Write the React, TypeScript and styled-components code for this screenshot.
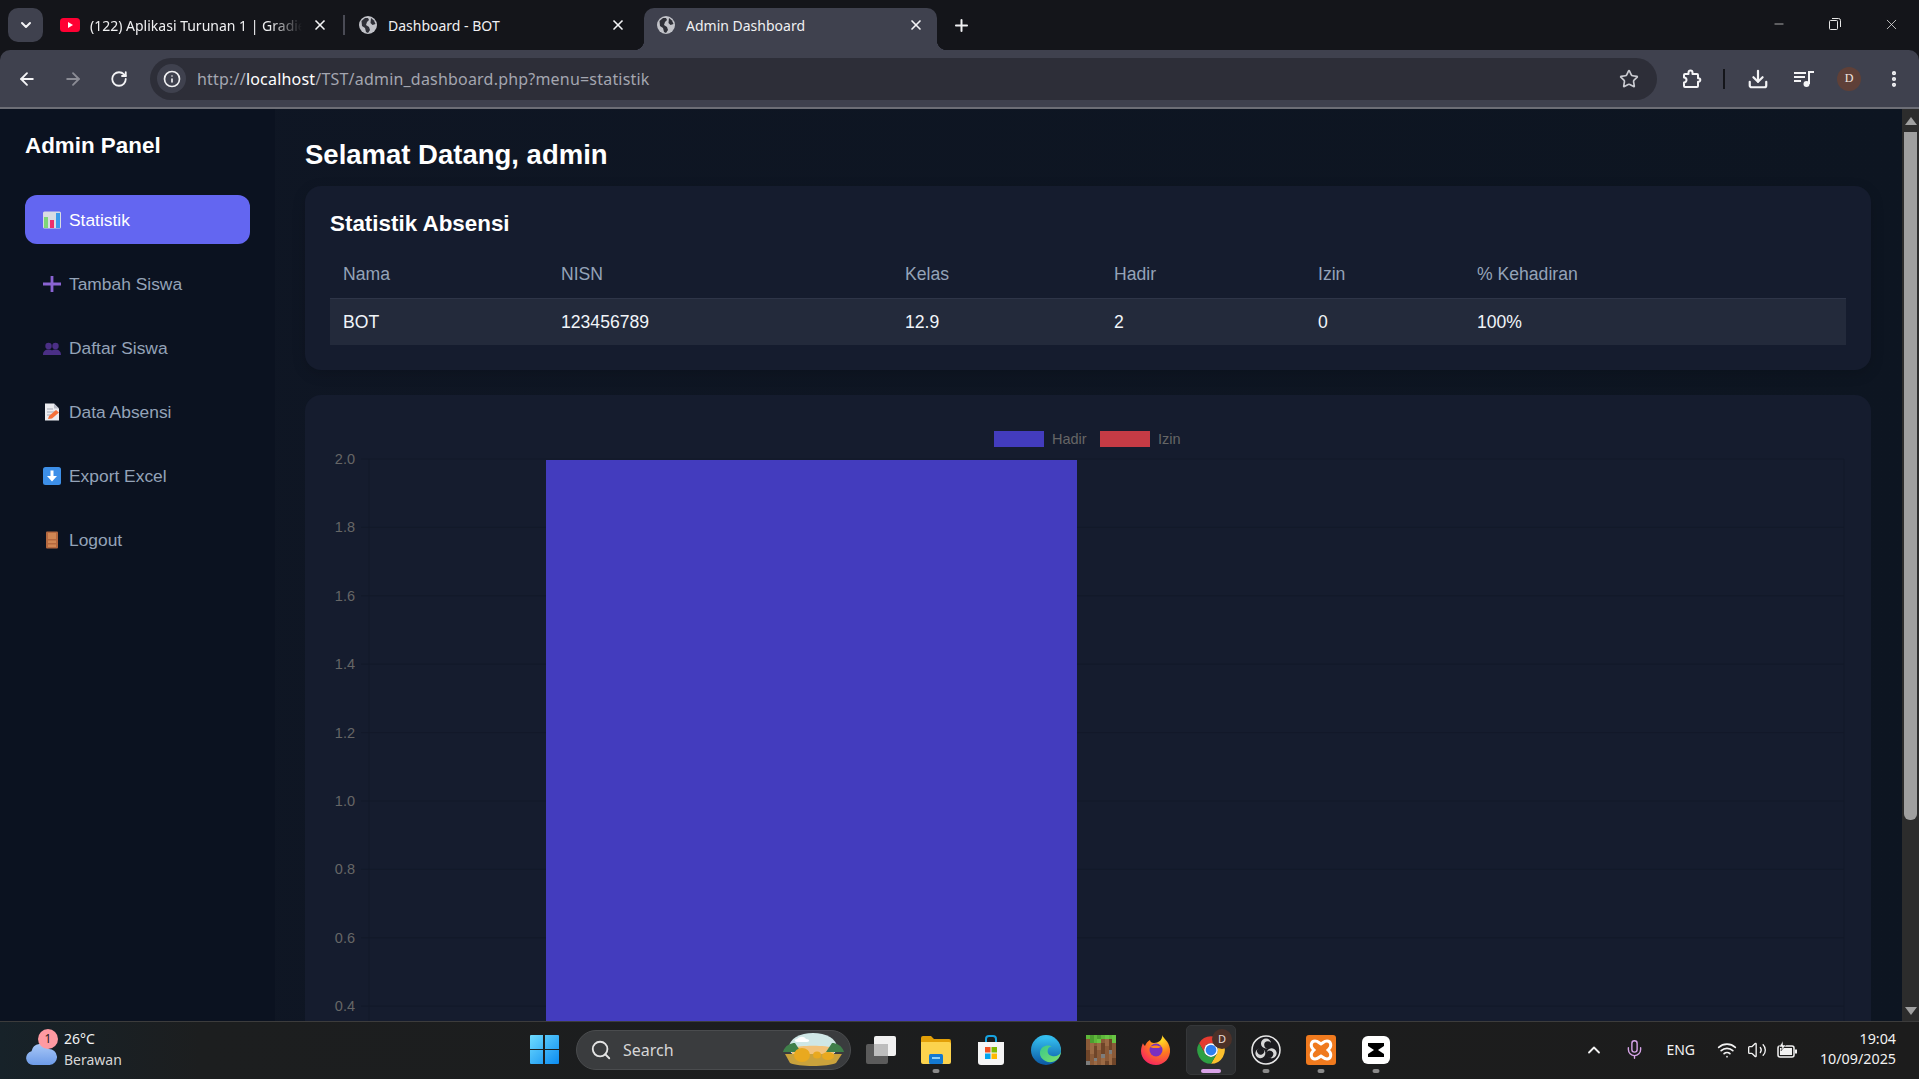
import React from 'react';
import styled, { createGlobalStyle } from 'styled-components';
import {
  ArrowLeft,
  ArrowRight,
  ChevronDown,
  ChevronUp,
  Download,
  EllipsisVertical,
  Info,
  Mic,
  Minus,
  Plus,
  RotateCw,
  Search,
  Star,
  Volume2,
  Wifi,
  X,
} from 'lucide-react';

const GlobalStyle = createGlobalStyle`
  html, body {
    margin: 0;
    height: 100%;
    overflow: hidden;
    background: #14151a;
  }
  * {
    box-sizing: border-box;
  }
`;

const YoutubeIcon = () => (
  <svg width="20" height="14" viewBox="0 0 20 14">
    <rect width="20" height="14" rx="3.5" fill="#ff0033" />
    <path d="M8 4l5 3-5 3z" fill="#fff" />
  </svg>
);

const GlobeIcon = () => (
  <svg width="20" height="20" viewBox="0 0 20 20">
    <circle cx="10" cy="10" r="9" fill="#c2c3c9" />
    <path d="M3.500 6l3.500-3 3 0 1 2-2 2-1 3 3 2 1 3-2 3-2-1-1-4-3-2z" fill="#2f3038" />
    <path d="M13 3l3 2.500 1.500 3.500-3 1-2-2z" fill="#2f3038" />
  </svg>
);

const PuzzleIcon = () => (
  <svg width="24" height="24" viewBox="0 0 24 24" fill="none" stroke="#f4f4f6" strokeWidth="2" strokeLinejoin="round">
    <path d="M6 7h3.500V5.500a2 2 0 0 1 4 0V7H18a1 1 0 0 1 1 1v3.200h.5a1.800 1.800 0 0 1 0 3.600H19V19a1 1 0 0 1-1 1H6a1 1 0 0 1-1-1v-3.500a2.500 2.500 0 0 0 0-5V8a1 1 0 0 1 1-1z" />
  </svg>
);

const MediaIcon = () => (
  <svg width="22" height="22" viewBox="0 0 22 22" fill="none" stroke="#f4f4f6" strokeWidth="2">
    <path d="M1 5h12M1 9h11M1 13h7" />
    <path d="M16 16V4h5" />
    <circle cx="13.500" cy="16" r="3" fill="#f4f4f6" stroke="none" />
  </svg>
);

const RestoreIcon = () => (
  <svg width="14" height="14" viewBox="0 0 14 14" fill="none" stroke="#e6e6e6" strokeWidth="1">
    <rect x="1.5" y="3.5" width="8" height="9" rx="1" />
    <path d="M4 1.5h6.5a2 2 0 0 1 2 2V10" />
  </svg>
);

const StatIcon = () => (
  <svg width="18" height="18" viewBox="0 0 18 18">
    <rect y="0.5" width="18" height="17" rx="1.5" fill="#d9dce3" />
    <rect x="1" y="6" width="4" height="11" fill="#7ed67a" />
    <rect x="7" y="9" width="4" height="8" fill="#ec2f6b" />
    <rect x="13" y="2" width="4" height="15" fill="#3b9bea" />
  </svg>
);

const AddIcon = () => (
  <svg width="18" height="18" viewBox="0 0 18 18">
    <path d="M7.6 1h2.8v6.6H18v2.8h-7.6V17H7.6v-6.6H0V7.6h7.6z" fill="#8a63d2" />
  </svg>
);

const PeopleIcon = () => (
  <svg width="18" height="18" viewBox="0 0 18 18" fill="#4b2f86">
    <circle cx="5.5" cy="7" r="3.2" />
    <circle cx="12.5" cy="7" r="3.2" />
    <path d="M0 16c0-3.4 2.2-5.4 5.5-5.4 1.5 0 2.6.4 3.5 1 .9-.6 2-1 3.5-1 3.3 0 5.5 2 5.5 5.4z" />
  </svg>
);

const MemoIcon = () => (
  <svg width="18" height="18" viewBox="0 0 18 18">
    <path d="M2 0.5h9l5 5v12H2z" fill="#ececf0" />
    <path d="M11 0.5l5 5h-5z" fill="#b9bcc6" />
    <path d="M4 6h6M4 9h8M4 12h4" stroke="#a5a8b5" strokeWidth="1" />
    <path d="M5 16l1-3 7-6 3 2.600-7 6z" fill="#f4703a" />
  </svg>
);

const DownBoxIcon = () => (
  <svg width="18" height="18" viewBox="0 0 18 18">
    <rect width="18" height="18" rx="2.500" fill="#3d8fe8" />
    <path d="M7.500 3.500h3v5.500H14l-5 5.500-5-5.500h3.500z" fill="#fff" />
  </svg>
);

const DoorIcon = () => (
  <svg width="18" height="18" viewBox="0 0 18 18">
    <rect x="3" y="0.500" width="12" height="17" rx="1" fill="#b5683f" />
    <path d="M5 2h8v6H5zM5 9.500h8V12H5zM5 13.500h8V16H5z" fill="#d18653" />
  </svg>
);

const CloudIcon = () => (
  <svg width="32" height="24" viewBox="0 0 32 24">
    <defs>
      <linearGradient id="cloudFill" x1="0" y1="0" x2="0" y2="1">
        <stop offset="0" stopColor="#a9c8f7" />
        <stop offset="1" stopColor="#6d9be8" />
      </linearGradient>
    </defs>
    <path
      d="M8 24a7 7 0 0 1-1.500-13.800A9 9 0 0 1 23.500 8a8 8 0 0 1 1 16z"
      fill="url(#cloudFill)"
    />
  </svg>
);

const WindowsIcon = () => (
  <svg width="29" height="29" viewBox="0 0 29 29">
    <defs>
      <linearGradient id="winFill" x1="0" y1="0" x2="1" y2="1">
        <stop offset="0" stopColor="#6fdcff" />
        <stop offset="1" stopColor="#0b8bf0" />
      </linearGradient>
    </defs>
    <path
      d="M1 0h12v14H0V1a1 1 0 0 1 1-1zM15 0h13a1 1 0 0 1 1 1v13H15zM0 15h13v14H1a1 1 0 0 1-1-1zM15 15h14v13a1 1 0 0 1-1 1H15z"
      fill="url(#winFill)"
    />
  </svg>
);

const SearchArt = () => (
  <svg width="63" height="34" viewBox="0 0 63 34">
    <ellipse cx="31" cy="14" rx="24" ry="14" fill="#cfe7e6" />
    <path d="M10 15c8-3 34-3 42 0v8H10z" fill="#f2c27a" />
    <path d="M1 19c2-7 8-9 12-9l6 9zM62 19c-2-7-8-9-12-9l-6 9z" fill="#3f7f4a" />
    <path d="M15 6c3-3 7-3 9 0 4 0 4 3 1 3H15c-3 0-3-3 0-3z" fill="#fff" />
    <path d="M3 21h57l-6 9c-8 4-38 4-46 0z" fill="#caa23c" />
    <ellipse cx="20" cy="22" rx="8" ry="7" fill="#e9a91f" />
    <ellipse cx="35" cy="22" rx="4" ry="3.500" fill="#e9a91f" />
    <ellipse cx="46" cy="23" rx="6" ry="4" fill="#e9a91f" />
  </svg>
);

const TaskViewIcon = () => (
  <svg width="30" height="28" viewBox="0 0 30 28">
    <rect x="0" y="8" width="22" height="20" rx="2" fill="#5b5b5b" />
    <rect x="8" y="0" width="22" height="20" rx="2" fill="#f1f1f1" />
    <rect x="8" y="8" width="14" height="12" fill="#bdbdbd" />
  </svg>
);

const ExplorerIcon = () => (
  <svg width="30" height="28" viewBox="0 0 30 28">
    <path d="M0 2a2 2 0 0 1 2-2h8l3 3h15a2 2 0 0 1 2 2v4H0z" fill="#e3a008" />
    <path d="M0 6h28a2 2 0 0 1 2 2v18a2 2 0 0 1-2 2H2a2 2 0 0 1-2-2z" fill="#fcd34d" />
    <rect x="8" y="18" width="14" height="10" rx="1.500" fill="#1479d1" />
    <rect x="11" y="21" width="8" height="2" fill="#8fd0f7" />
  </svg>
);

const StoreIcon = () => (
  <svg width="28" height="30" viewBox="0 0 28 30">
    <path d="M9 8V4a3 3 0 0 1 3-3h4a3 3 0 0 1 3 3v4" fill="none" stroke="#17a3e0" strokeWidth="2" />
    <path d="M1 7h26v20a3 3 0 0 1-3 3H4a3 3 0 0 1-3-3z" fill="#f5f5f5" />
    <rect x="8" y="12" width="5.500" height="5.500" fill="#f25022" />
    <rect x="14.500" y="12" width="5.500" height="5.500" fill="#7fba00" />
    <rect x="8" y="18.500" width="5.500" height="5.500" fill="#00a4ef" />
    <rect x="14.500" y="18.500" width="5.500" height="5.500" fill="#ffb900" />
  </svg>
);

const EdgeIcon = () => (
  <svg width="30" height="30" viewBox="0 0 30 30">
    <defs>
      <linearGradient id="edgeA" x1="0" y1="0" x2="0" y2="1">
        <stop offset="0" stopColor="#35c1f1" />
        <stop offset="1" stopColor="#0c59a4" />
      </linearGradient>
      <linearGradient id="edgeB" x1="0" y1="0" x2="1" y2="1">
        <stop offset="0" stopColor="#2fc58f" />
        <stop offset="1" stopColor="#7ee06a" />
      </linearGradient>
    </defs>
    <circle cx="15" cy="15" r="15" fill="url(#edgeA)" />
    <path
      d="M30 16C30 9 23 6 18 6 11 6 7 11 8 17c.800 6 6 11 13 10 5-1 9-5 9-11z"
      fill="url(#edgeB)"
    />
    <path
      d="M30 17c-1 3-5 5-9 4-4-1-5-4-4-7 .600-2 3-3 5-2-4-3-12-2-13 5-.500 6 4 12 11 12-8 1-17-5-17-14C3 7 9 2 16 2c8 0 14 6 14 15z"
      fill="url(#edgeA)"
    />
  </svg>
);

const GRASS = ['#5eb83a', '#4c9e30', '#69c544'];
const DIRT = ['#8a5a38', '#6f4529', '#9b6a45', '#7d7d7d'];
const MC_CELLS = Array.from({ length: 64 }, (_, i) => {
  const row = Math.floor(i / 8);
  const n = (i * 7 + row * 13) % 11;
  if (row === 0 || (row === 1 && n % 2 === 0)) return GRASS[n % 3];
  if (n === 10) return DIRT[3];
  return DIRT[n % 3];
});

const MinecraftIcon = () => (
  <svg width="30" height="30" viewBox="0 0 32 32" shapeRendering="crispEdges">
    {MC_CELLS.map((color, i) => (
      <rect key={i} x={(i % 8) * 4} y={Math.floor(i / 8) * 4} width="4" height="4" fill={color} />
    ))}
  </svg>
);

const FirefoxIcon = () => (
  <svg width="30" height="30" viewBox="0 0 30 30">
    <defs>
      <radialGradient id="foxBody" cx="0.700" cy="0.150" r="1">
        <stop offset="0" stopColor="#ffe226" />
        <stop offset="0.450" stopColor="#ff7a1f" />
        <stop offset="1" stopColor="#f5156c" />
      </radialGradient>
    </defs>
    <path
      d="M21 0c1 3 7 6 8 14 1 9-6 16-14 16C7 30 0 24 0 16c0-3 1-6 2-8 0 1 1 2 2 3 1-3 3-5 5-6 0 2 2 3 4 3 4 0 9-3 8-8z"
      fill="url(#foxBody)"
    />
    <circle cx="15" cy="15" r="6.500" fill="#7b2fbf" />
    <path d="M9 12c3-2 8-2 11 0-2 1-3 1-4 1-3 0-5 0-7-1z" fill="#ff8a1f" />
  </svg>
);

const ChromeIcon = () => (
  <svg width="30" height="30" viewBox="0 0 24 24">
    <path d="M2.470 6.500A11 11 0 0 1 21.530 6.500H12a5.500 5.500 0 0 0-4.760 8.250z" fill="#e53b30" />
    <path d="M21.530 6.500A11 11 0 0 1 12 23l4.760-8.250A5.500 5.500 0 0 0 12 6.500z" fill="#fbc02d" />
    <path d="M12 23A11 11 0 0 1 2.470 6.500l4.770 8.250a5.500 5.500 0 0 0 9.520 0z" fill="#2ea043" />
    <circle cx="12" cy="12" r="5.500" fill="#fff" />
    <circle cx="12" cy="12" r="4.300" fill="#2f7ff0" />
  </svg>
);

const ObsIcon = () => (
  <svg width="30" height="30" viewBox="0 0 30 30">
    <circle cx="15" cy="15" r="14" fill="#1c1c20" stroke="#e8e8e8" strokeWidth="1.500" />
    {[0, 120, 240].map((deg) => (
      <g key={deg} transform={`rotate(${deg} 15 15)`}>
        <circle cx="15" cy="8.500" r="5" fill="#d8d8d8" />
        <circle cx="16.800" cy="9.800" r="3.600" fill="#1c1c20" />
      </g>
    ))}
  </svg>
);

const XamppIcon = () => (
  <svg width="30" height="30" viewBox="0 0 30 30">
    <rect width="30" height="30" rx="3" fill="#f07a1e" />
    <path
      d="M9 6c3 0 4 2 6 3 2-1 3-3 6-3 4 0 5 5 2 8l-1 1 1 1c3 3 2 8-2 8-3 0-4-2-6-3-2 1-3 3-6 3-4 0-5-5-2-8l1-1-1-1c-3-3-2-8 2-8z"
      fill="none"
      stroke="#fff"
      strokeWidth="3"
    />
  </svg>
);

const CapcutIcon = () => (
  <svg width="28" height="28" viewBox="0 0 28 28">
    <rect width="28" height="28" rx="6" fill="#fff" />
    <path d="M6 7h16v3l-6 4 6 4v3H6v-3l6-4-6-4z" fill="#000" />
  </svg>
);

const BatteryIcon = () => (
  <svg width="20" height="18" viewBox="0 0 20 18" fill="none">
    <rect x="1" y="5" width="16" height="11" rx="2" stroke="#f2f2f2" strokeWidth="1.500" />
    <rect x="3" y="7" width="12" height="7" fill="#f2f2f2" />
    <rect x="18" y="8.500" width="2" height="4" fill="#f2f2f2" />
    <path d="M6 0L2 6h3l-1 4 5-6H6z" fill="#f2f2f2" stroke="#1c1c1c" strokeWidth="0.500" />
  </svg>
);

const NAV_ITEMS = [
  { label: 'Statistik', icon: <StatIcon />, active: true },
  { label: 'Tambah Siswa', icon: <AddIcon /> },
  { label: 'Daftar Siswa', icon: <PeopleIcon /> },
  { label: 'Data Absensi', icon: <MemoIcon /> },
  { label: 'Export Excel', icon: <DownBoxIcon /> },
  { label: 'Logout', icon: <DoorIcon /> },
];

const HEADERS = ['Nama', 'NISN', 'Kelas', 'Hadir', 'Izin', '% Kehadiran'];
const ROW = ['BOT', '123456789', '12.9', '2', '0', '100%'];

const TASK_APPS = [
  { name: 'explorer', icon: <ExplorerIcon />, state: 'running' },
  { name: 'store', icon: <StoreIcon /> },
  { name: 'edge', icon: <EdgeIcon /> },
  { name: 'minecraft', icon: <MinecraftIcon /> },
  { name: 'firefox', icon: <FirefoxIcon /> },
  { name: 'chrome', icon: <ChromeIcon />, state: 'active' },
  { name: 'obs', icon: <ObsIcon />, state: 'running' },
  { name: 'xampp', icon: <XamppIcon />, state: 'running' },
  { name: 'capcut', icon: <CapcutIcon />, state: 'running' },
];

// chart.js style plot, coordinates are canvas pixels
const TICKS = ['2.0', '1.8', '1.6', '1.4', '1.2', '1.0', '0.8', '0.6', '0.4'];
const PLOT = { left: 39, right: 1514, top: 39, step: 68.4 };

const BarChart = () => (
  <ChartSvg viewBox="0 0 1516 640">
    <rect x="664" y="11" width="50" height="16" fill="#433cbe" />
    <ChartText x="722" y="24">Hadir</ChartText>
    <rect x="770" y="11" width="50" height="16" fill="#c53b45" />
    <ChartText x="828" y="24">Izin</ChartText>
    {TICKS.map((t, i) => {
      const y = PLOT.top + i * PLOT.step;
      return (
        <g key={t}>
          <GridLine x1={PLOT.left - 8} x2={PLOT.right} y1={y} y2={y} />
          <ChartText x={PLOT.left - 14} y={y + 5} textAnchor="end">
            {t}
          </ChartText>
        </g>
      );
    })}
    <GridLine x1={PLOT.left} x2={PLOT.left} y1={PLOT.top} y2={640} />
    <GridLine x1={PLOT.right} x2={PLOT.right} y1={PLOT.top} y2={640} />
    <rect x="216" y="40" width="531" height="600" fill="#433cbe" />
  </ChartSvg>
);

const App: React.FC = () => {
  return (
    <Shell>
      <GlobalStyle />
      <TabStrip>
        <TabSwitcher>
          <ChevronDown size={16} strokeWidth={3} />
        </TabSwitcher>
        <Tab>
          <YoutubeIcon />
          <TabTitle $fade>(122) Aplikasi Turunan 1 | Gradie</TabTitle>
          <CloseBtn><X size={16} strokeWidth={2.5} /></CloseBtn>
        </Tab>
        <TabDivider />
        <Tab>
          <GlobeIcon />
          <TabTitle>Dashboard - BOT</TabTitle>
          <CloseBtn><X size={16} strokeWidth={2.5} /></CloseBtn>
        </Tab>
        <Tab $active>
          <GlobeIcon />
          <TabTitle>Admin Dashboard</TabTitle>
          <CloseBtn><X size={16} strokeWidth={2.5} /></CloseBtn>
        </Tab>
        <NewTab><Plus size={19} strokeWidth={2.5} /></NewTab>
        <WindowControls>
          <WindowBtn><Minus size={14} strokeWidth={1.2} /></WindowBtn>
          <WindowBtn><RestoreIcon /></WindowBtn>
          <WindowBtn><X size={17} strokeWidth={1.1} /></WindowBtn>
        </WindowControls>
      </TabStrip>

      <Toolbar>
        <NavBtn><ArrowLeft size={20} strokeWidth={2.2} /></NavBtn>
        <NavBtn $muted><ArrowRight size={20} strokeWidth={2.2} /></NavBtn>
        <NavBtn><RotateCw size={18} strokeWidth={2.4} /></NavBtn>
        <Omnibox>
          <InfoChip><Info size={18} strokeWidth={2.2} /></InfoChip>
          <UrlText>
            http://<UrlHost>localhost</UrlHost>/TST/admin_dashboard.php?menu=statistik
          </UrlText>
          <StarSlot><Star size={20} strokeWidth={2} /></StarSlot>
        </Omnibox>
        <ToolIcons>
          <ToolBtn $w={40}><PuzzleIcon /></ToolBtn>
          <ToolDivider />
          <ToolBtn $w={46}><Download size={22} strokeWidth={2.4} /></ToolBtn>
          <ToolBtn $w={46}><MediaIcon /></ToolBtn>
          <ToolBtn $w={44}><Avatar>D</Avatar></ToolBtn>
          <ToolBtn $w={46}><EllipsisVertical size={20} strokeWidth={3} /></ToolBtn>
        </ToolIcons>
      </Toolbar>

      <Viewport>
        <Sidebar>
          <Brand>Admin Panel</Brand>
          <Nav>
            {NAV_ITEMS.map((item) => (
              <NavItem key={item.label} $active={item.active}>
                {item.icon}
                <NavLabel>{item.label}</NavLabel>
              </NavItem>
            ))}
          </Nav>
        </Sidebar>
        <Main>
          <Greeting>Selamat Datang, admin</Greeting>
          <Card>
            <CardTitle>Statistik Absensi</CardTitle>
            <TableHead>
              {HEADERS.map((h) => (
                <span key={h}>{h}</span>
              ))}
            </TableHead>
            <TableRow>
              {ROW.map((c) => (
                <span key={c}>{c}</span>
              ))}
            </TableRow>
          </Card>
          <ChartCard>
            <BarChart />
          </ChartCard>
        </Main>
        <Scrollbar>
          <ScrollArrow $up />
          <ScrollTrack>
            <ScrollThumb />
          </ScrollTrack>
          <ScrollArrow />
        </Scrollbar>
      </Viewport>

      <Taskbar>
        <Weather>
          <CloudWrap>
            <CloudIcon />
            <WeatherBadge>1</WeatherBadge>
          </CloudWrap>
          <WeatherText>
            <span>26°C</span>
            <span>Berawan</span>
          </WeatherText>
        </Weather>
        <TaskCenter>
          <WindowsIcon />
          <SearchPill>
            <Search size={22} strokeWidth={2} color="#e4e4e4" />
            <SearchLabel>Search</SearchLabel>
            <SearchArt />
          </SearchPill>
          <TaskViewSlot><TaskViewIcon /></TaskViewSlot>
          <AppRow>
            {TASK_APPS.map((app) => (
              <AppSlot key={app.name} $active={app.state === 'active'}>
                {app.icon}
                {app.name === 'chrome' && <ProfileBadge>D</ProfileBadge>}
                {app.state && <RunMark $active={app.state === 'active'} />}
              </AppSlot>
            ))}
          </AppRow>
        </TaskCenter>
        <Tray>
          <TrayBtn $w={20}><ChevronUp size={20} strokeWidth={2.2} /></TrayBtn>
          <MicSlot><Mic size={21} strokeWidth={1.6} color="#d6a4e8" /></MicSlot>
          <Lang>ENG</Lang>
          <TrayIcons>
            <Wifi size={20} strokeWidth={2} />
            <Volume2 size={20} strokeWidth={1.6} />
            <BatteryIcon />
          </TrayIcons>
          <Clock>
            <span>19:04</span>
            <span>10/09/2025</span>
          </Clock>
        </Tray>
      </Taskbar>
    </Shell>
  );
};

const Shell = styled.div`
  display: flex;
  flex-direction: column;
  width: 1919px;
  height: 1079px;
  overflow: hidden;
  background: #14151a;
`;

const TabStrip = styled.div`
  display: flex;
  align-items: flex-end;
  flex: 0 0 50px;
  padding-left: 8px;
  font-family: 'Noto Sans', sans-serif;
  color: #f0f0f2;
`;

const TabSwitcher = styled.div`
  display: flex;
  align-items: center;
  justify-content: center;
  width: 35px;
  height: 34px;
  margin-bottom: 8px;
  margin-right: 5px;
  border-radius: 10px;
  background: #3f414e;
  color: #f4f4f6;
`;

const Tab = styled.div<{ $active?: boolean }>`
  position: relative;
  display: flex;
  align-items: center;
  gap: 10px;
  width: 293px;
  height: 42px;
  padding: 0 13px 8px 12px;
  border-radius: 10px 10px 0 0;
  background: ${(props) => (props.$active ? '#3f414e' : 'transparent')};
  margin-left: ${(props) => (props.$active ? '5px' : '0')};
  font-size: 14px;

  svg {
    flex-shrink: 0;
  }

  ${(props) =>
    props.$active &&
    `
    &::before, &::after {
      content: '';
      position: absolute;
      bottom: 0;
      width: 10px;
      height: 10px;
    }
    &::before {
      left: -10px;
      background: radial-gradient(circle at 0 0, transparent 10px, #3f414e 10.500px);
    }
    &::after {
      right: -10px;
      background: radial-gradient(circle at 100% 0, transparent 10px, #3f414e 10.500px);
    }
  `}
`;

const TabTitle = styled.span<{ $fade?: boolean }>`
  flex: 1;
  overflow: hidden;
  white-space: nowrap;
  ${(props) =>
    props.$fade &&
    `mask-image: linear-gradient(to right, #000 85%, transparent 100%);`}
`;

const CloseBtn = styled.span`
  display: flex;
  color: #f4f4f6;
`;

const TabDivider = styled.div`
  width: 2px;
  height: 20px;
  margin: 0 1px 15px 2px;
  background: #4a4b55;
`;

const NewTab = styled.div`
  display: flex;
  margin: 0 0 15px 15px;
`;

const WindowControls = styled.div`
  display: flex;
  align-items: center;
  margin-left: auto;
  height: 50px;
`;

const WindowBtn = styled.div`
  display: flex;
  align-items: center;
  justify-content: center;
  width: 56px;
  margin-bottom: 2px;
  color: #e6e6e6;
`;

const Toolbar = styled.div`
  display: flex;
  align-items: center;
  flex: 0 0 59px;
  padding-left: 4px;
  border-radius: 10px 10px 0 0;
  border-bottom: 2px solid #6d6e76;
  background: #3f414e;
`;

const NavBtn = styled.div<{ $muted?: boolean }>`
  display: flex;
  align-items: center;
  justify-content: center;
  width: 46px;
  color: ${(props) => (props.$muted ? '#8b8c95' : '#f4f4f6')};
`;

const Omnibox = styled.div`
  display: flex;
  align-items: center;
  width: 1507px;
  height: 42px;
  margin-left: 8px;
  padding: 0 18px 0 7px;
  border-radius: 21px;
  background: #2d2e38;
  font-family: 'Noto Sans', sans-serif;
`;

const InfoChip = styled.div`
  display: flex;
  align-items: center;
  justify-content: center;
  width: 29px;
  height: 29px;
  border-radius: 50%;
  background: #3f414e;
  color: #f0f0f2;
`;

const UrlText = styled.span`
  flex: 1;
  margin-left: 11px;
  font-size: 16px;
  letter-spacing: 0.2px;
  color: #a4a6b0;
`;

const UrlHost = styled.span`
  color: #ffffff;
`;

const StarSlot = styled.div`
  display: flex;
  color: #c9cad0;
`;

const ToolIcons = styled.div`
  display: flex;
  align-items: center;
  margin-left: 14px;
  color: #f4f4f6;
`;

const ToolBtn = styled.div<{ $w: number }>`
  display: flex;
  align-items: center;
  justify-content: center;
  width: ${(props) => props.$w}px;
`;

const ToolDivider = styled.div`
  width: 2px;
  height: 20px;
  margin: 0 10px 0 12px;
  background: #14151a;
`;

const Avatar = styled.div`
  display: flex;
  align-items: center;
  justify-content: center;
  width: 24px;
  height: 24px;
  border-radius: 50%;
  background: #5f4038;
  font-size: 12px;
  color: #f2e6e0;
`;

const Viewport = styled.div`
  display: flex;
  flex: 1;
  min-height: 0;
  font-family: 'Liberation Sans', Arial, sans-serif;
  background: linear-gradient(to right, #0f1624, #0d1521);
`;

const Sidebar = styled.aside`
  flex: 0 0 275px;
  padding: 0 25px;
  background: #0b1220;
`;

const Brand = styled.h2`
  margin: 24px 0 0;
  font-size: 22.4px;
  line-height: 26px;
  font-weight: 700;
  color: #ffffff;
`;

const Nav = styled.nav`
  display: flex;
  flex-direction: column;
  gap: 15px;
  margin-top: 36px;
`;

const NavItem = styled.div<{ $active?: boolean }>`
  display: flex;
  align-items: center;
  gap: 8px;
  height: 49px;
  padding-left: 18px;
  border-radius: 12px;
  background: ${(props) => (props.$active ? '#6366f1' : 'transparent')};
  color: ${(props) => (props.$active ? '#ffffff' : '#94a3b8')};
  font-size: 17.4px;
`;

const NavLabel = styled.span`
  padding-top: 2px;
`;

const Main = styled.main`
  flex: 1;
  min-width: 0;
  padding: 0 31px 0 30px;
  overflow: hidden;
`;

const Greeting = styled.h1`
  margin: 30px 0 0;
  font-size: 27.5px;
  line-height: 32px;
  font-weight: 700;
  color: #ffffff;
`;

const Card = styled.section`
  height: 184px;
  margin-top: 15px;
  padding: 25px;
  border-radius: 16px;
  background: #151c2e;
  box-shadow: 0 4px 14px rgba(0, 0, 0, 0.15);
`;

const CardTitle = styled.h3`
  margin: 0;
  font-size: 22.4px;
  line-height: 26px;
  font-weight: 700;
  color: #ffffff;
`;

const TABLE_COLUMNS = '218px 344px 209px 204px 159px 1fr';

const TableHead = styled.div`
  display: grid;
  grid-template-columns: ${TABLE_COLUMNS};
  align-items: center;
  height: 49px;
  margin-top: 12px;
  padding: 1px 0 0 13px;
  font-size: 17.6px;
  color: #94a3b8;
`;

const TableRow = styled.div`
  display: grid;
  grid-template-columns: ${TABLE_COLUMNS};
  align-items: center;
  height: 47px;
  padding-left: 13px;
  border-top: 1px solid #2e3548;
  background: #232a3b;
  font-size: 17.6px;
  color: #f1f5f9;
`;

const ChartCard = styled.section`
  height: 700px;
  margin-top: 25px;
  padding: 25px;
  border-radius: 16px;
  background: #151c2e;
`;

const ChartSvg = styled.svg`
  display: block;
  width: 1516px;
  height: 640px;
`;

const ChartText = styled.text`
  font-family: 'Liberation Sans', Arial, sans-serif;
  font-size: 14.5px;
  fill: #666666;
`;

const GridLine = styled.line`
  stroke: #121929;
  stroke-width: 1;
`;

const Scrollbar = styled.div`
  display: flex;
  flex-direction: column;
  flex: 0 0 17px;
  background: #2c2c2c;
`;

const ScrollArrow = styled.div<{ $up?: boolean }>`
  display: flex;
  align-items: center;
  justify-content: center;
  flex: 0 0 ${(props) => (props.$up ? 23 : 21)}px;

  &::after {
    content: '';
    border-left: 6px solid transparent;
    border-right: 6px solid transparent;
    ${(props) =>
      props.$up ? 'border-bottom: 8px solid #a0a0a0;' : 'border-top: 8px solid #a0a0a0;'}
  }
`;

const ScrollTrack = styled.div`
  flex: 1;
  padding: 0 2px;
`;

const ScrollThumb = styled.div`
  height: 688px;
  border-radius: 0 0 6px 6px;
  background: #9f9f9f;
`;

const Taskbar = styled.footer`
  display: flex;
  align-items: center;
  flex: 0 0 58px;
  padding: 0 0 2px 25px;
  border-top: 1px solid #3c3c3c;
  background: linear-gradient(to right, #172229 0, #1c1e1f 200px, #1c1c1c 100%);
  font-family: 'Noto Sans', sans-serif;
  color: #f2f2f2;
`;

const Weather = styled.div`
  display: flex;
  align-items: center;
  gap: 7px;
  width: 505px;
`;

const CloudWrap = styled.div`
  position: relative;
  display: flex;
  width: 32px;
  margin-top: 6px;
`;

const WeatherBadge = styled.span`
  position: absolute;
  top: -12px;
  left: 13px;
  width: 20px;
  height: 20px;
  border-radius: 50%;
  background: #ff9aa2;
  color: #2a1a1a;
  font-size: 12px;
  line-height: 20px;
  text-align: center;
`;

const WeatherText = styled.div`
  display: flex;
  flex-direction: column;
  gap: 3px;
  font-size: 14px;
  line-height: 18px;

  span:last-child {
    color: #d6d6d6;
  }
`;

const TaskCenter = styled.div`
  display: flex;
  align-items: center;
`;

const SearchPill = styled.div`
  display: flex;
  align-items: center;
  width: 275px;
  height: 40px;
  margin-left: 17px;
  padding: 0 5px 0 13px;
  border: 1px solid #4a4c4e;
  border-radius: 20px;
  background: #3a3c3e;
`;

const SearchLabel = styled.span`
  flex: 1;
  margin-left: 11px;
  font-size: 16px;
  color: #d6d6d6;
`;

const TaskViewSlot = styled.div`
  display: flex;
  justify-content: flex-end;
  width: 45px;
`;

const AppRow = styled.div`
  display: flex;
  gap: 5px;
  margin-left: 15px;
`;

const AppSlot = styled.div<{ $active?: boolean }>`
  position: relative;
  display: flex;
  align-items: center;
  justify-content: center;
  width: 50px;
  height: 50px;
  border-radius: 5px;
  background: ${(props) => (props.$active ? '#2c2e30' : 'transparent')};
  border: 1px solid ${(props) => (props.$active ? '#353739' : 'transparent')};
`;

const ProfileBadge = styled.span`
  position: absolute;
  top: 3px;
  right: 3px;
  width: 20px;
  height: 20px;
  border-radius: 50%;
  background: #4c3128;
  font-size: 11px;
  line-height: 20px;
  text-align: center;
  color: #e8dcd6;
`;

const RunMark = styled.span<{ $active?: boolean }>`
  position: absolute;
  bottom: 1px;
  left: 50%;
  width: ${(props) => (props.$active ? 20 : 7)}px;
  height: 4px;
  border-radius: 2px;
  transform: translateX(-50%);
  background: ${(props) => (props.$active ? '#d9a3e8' : '#8a8a8a')};
`;

const Tray = styled.div`
  display: flex;
  align-items: center;
  margin-left: auto;
  padding-right: 23px;
`;

const TrayBtn = styled.div<{ $w: number }>`
  display: flex;
  justify-content: center;
  width: ${(props) => props.$w}px;
`;

const MicSlot = styled.div`
  display: flex;
  margin-left: 20px;
`;

const Lang = styled.span`
  margin-left: 21px;
  font-size: 14px;
`;

const TrayIcons = styled.div`
  display: flex;
  align-items: center;
  gap: 10px;
  margin-left: 22px;
`;

const Clock = styled.div`
  display: flex;
  flex-direction: column;
  align-items: flex-end;
  gap: 2px;
  width: 90px;
  margin: 0 0 2px 9px;
  font-size: 14.3px;
  line-height: 18px;
`;

export default App;
